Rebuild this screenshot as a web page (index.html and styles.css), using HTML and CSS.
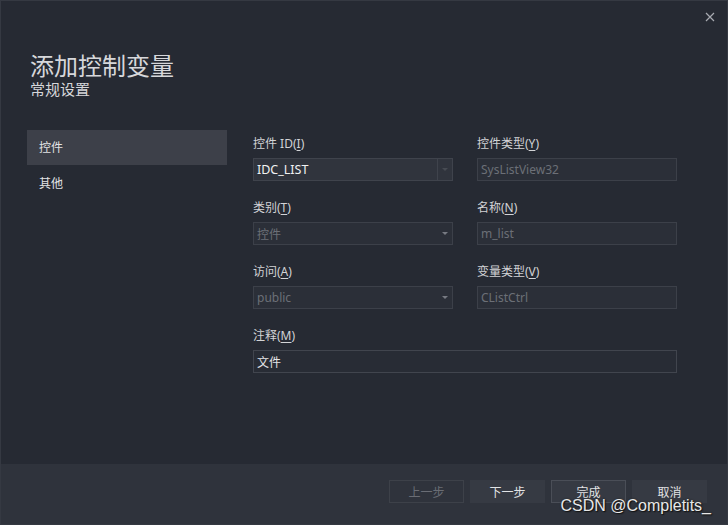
FILE: index.html
```html
<!DOCTYPE html>
<html lang="zh-CN">
<head>
  <meta charset="UTF-8">
  <title>添加控制变量</title>
  <link rel="stylesheet" href="styles.css">
</head>
<body>
  <div class="window">
    <button class="close" aria-label="关闭">
      <svg width="10" height="10" viewBox="0 0 10 10"><path d="M1 1 L9 9 M9 1 L1 9" stroke="#a8abb1" stroke-width="1.2" fill="none"/></svg>
    </button>
    <div class="header">
      <div class="title">添加控制变量</div>
      <div class="subtitle">常规设置</div>
    </div>
    <div class="main">
      <div class="nav">
        <div class="nav-item active">控件</div>
        <div class="nav-item">其他</div>
      </div>
      <div class="form">
        <div class="field">
          <div class="label">控件 ID(<u>I</u>)</div>
          <div class="input combo">
            <span class="value">IDC_LIST</span>
            <span class="drop split"><i class="arrow dim"></i></span>
          </div>
        </div>
        <div class="field">
          <div class="label">控件类型(<u>Y</u>)</div>
          <div class="input disabled"><span class="value">SysListView32</span></div>
        </div>
        <div class="field">
          <div class="label">类别(<u>T</u>)</div>
          <div class="input disabled">
            <span class="value">控件</span>
            <span class="drop"><i class="arrow"></i></span>
          </div>
        </div>
        <div class="field">
          <div class="label">名称(<u>N</u>)</div>
          <div class="input disabled"><span class="value">m_list</span></div>
        </div>
        <div class="field">
          <div class="label">访问(<u>A</u>)</div>
          <div class="input disabled">
            <span class="value">public</span>
            <span class="drop"><i class="arrow"></i></span>
          </div>
        </div>
        <div class="field">
          <div class="label">变量类型(<u>V</u>)</div>
          <div class="input disabled"><span class="value">CListCtrl</span></div>
        </div>
        <div class="field wide">
          <div class="label">注释(<u>M</u>)</div>
          <div class="input text"><span class="value">文件</span></div>
        </div>
      </div>
    </div>
    <div class="footer">
      <button class="btn off">上一步</button>
      <button class="btn">下一步</button>
      <button class="btn default">完成</button>
      <button class="btn">取消</button>
    </div>
    <div class="watermark">CSDN @Completits_</div>
  </div>
</body>
</html>
```

FILE: styles.css
```css
html, body {
  margin: 0;
  padding: 0;
  background: #262a33;
  font-family: "Noto Sans", "Noto Sans CJK SC", sans-serif;
  overflow: hidden;
}
.window {
  width: 728px;
  height: 525px;
  box-sizing: border-box;
  border: 1px solid #353942;
  background: #262a33;
  display: flex;
  flex-direction: column;
  position: relative;
}
.close {
  position: absolute;
  top: 10px;
  right: 11px;
  width: 12px;
  height: 12px;
  padding: 0;
  border: 0;
  background: none;
  display: flex;
  align-items: center;
  justify-content: center;
}
.header {
  padding: 52px 0 0 29px;
  color: #d6d7da;
}
.title {
  font-size: 24px;
  line-height: 26px;
}
.subtitle {
  font-size: 15px;
  line-height: 20px;
}
.main {
  flex: 1;
  display: flex;
  padding: 31px 0 0 26px;
}
.nav {
  width: 200px;
  flex: none;
}
.nav-item {
  height: 35px;
  line-height: 36px;
  padding-left: 12px;
  font-size: 12px;
  color: #e2e3e5;
}
.nav-item + .nav-item {
  margin-top: 1px;
}
.nav-item.active {
  background: #3d4049;
}
.form {
  margin-left: 26px;
  padding-top: 6px;
  display: grid;
  grid-template-columns: 200px 200px;
  column-gap: 24px;
  align-content: start;
}
.field {
  height: 64px;
}
.field.wide {
  grid-column: 1 / 3;
}
.label {
  font-size: 12px;
  line-height: 16px;
  color: #d2d3d6;
  margin-bottom: 6px;
}
.label u {
  text-underline-offset: 2px;
}
.input {
  height: 23px;
  box-sizing: border-box;
  border: 1px solid #3c4049;
  background: #2b2f38;
  display: flex;
  align-items: center;
  font-size: 12px;
}
.input .value {
  flex: 1;
  padding-left: 3px;
  white-space: nowrap;
}
.input.combo {
  background: #30343d;
  border-color: #3f434c;
  color: #f0f1f2;
}
.input.combo .value {
  font-size: 12.5px;
}
.input.disabled {
  color: #6c6f77;
}
.input.text {
  background: #282c35;
  border-color: #41454e;
  color: #e4e5e7;
}
.drop {
  width: 13px;
  height: 100%;
  display: flex;
  align-items: center;
  justify-content: center;
  margin-right: 1px;
}
.drop.split {
  border-left: 1px solid #3f434c;
}
.arrow {
  width: 0;
  height: 0;
  border-left: 3px solid transparent;
  border-right: 3px solid transparent;
  border-top: 3px solid #777a82;
}
.arrow.dim {
  border-top-color: #474b53;
}
.footer {
  height: 60px;
  background: #2f333c;
  display: flex;
  justify-content: flex-end;
  align-items: flex-start;
  gap: 6px;
  padding: 16px 20px 0 0;
  box-sizing: border-box;
}
.btn {
  width: 75px;
  height: 23px;
  box-sizing: border-box;
  border: 1px solid #363a43;
  background: #363a43;
  color: #e2e3e5;
  font-family: "Noto Sans CJK SC", sans-serif;
  font-size: 12px;
  padding: 0;
}
.btn.off {
  background: #2f333c;
  border-color: #3d4149;
  color: #6a6d75;
}
.btn.default {
  border-color: #4a4e57;
}
.watermark {
  position: absolute;
  right: 16px;
  bottom: 9px;
  font-family: "Liberation Sans", Arial, sans-serif;
  font-size: 16px;
  color: #e8e8e8;
  text-shadow: 1px 1px 1px #111, 0 0 2px #222;
}
```
